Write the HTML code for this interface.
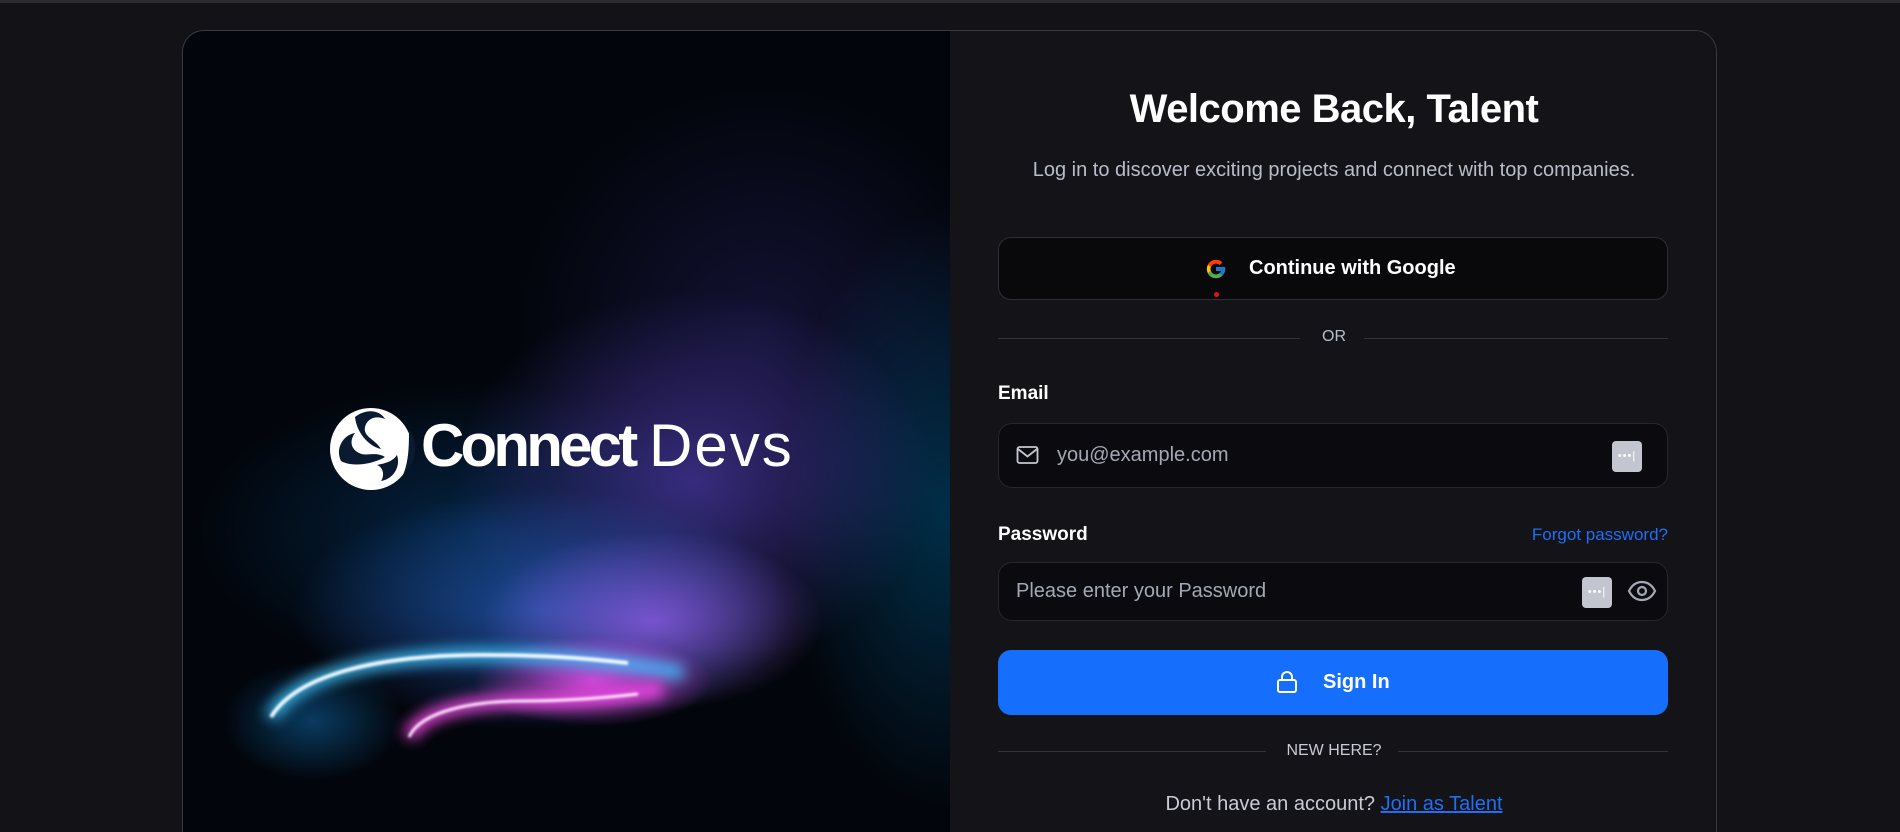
<!DOCTYPE html>
<html><head><meta charset="utf-8"><style>
*{margin:0;padding:0;box-sizing:border-box}
html,body{width:1900px;height:832px;overflow:hidden}
body{background:#131317;font-family:"Liberation Sans",sans-serif;position:relative}
.topbar{position:absolute;left:0;top:0;width:1900px;height:3px;background:#2c2c2e}
.card{position:absolute;left:182px;top:30px;width:1535px;height:802px;border:1px solid #3a3a42;border-bottom:none;border-radius:22px 22px 0 0;overflow:hidden;background:#121217}
.left{position:absolute;left:0;top:0;width:767px;height:802px;background:
radial-gradient(ellipse 120px 45px at 410px 650px,rgba(235,75,235,.85),rgba(235,75,235,0) 100%),
radial-gradient(ellipse 170px 90px at 470px 590px,rgba(150,95,240,.75),rgba(150,95,240,0) 100%),
radial-gradient(ellipse 250px 120px at 360px 580px,rgba(45,110,225,.6),rgba(45,110,225,0) 100%),
radial-gradient(ellipse 90px 60px at 130px 690px,rgba(20,140,225,.4),rgba(20,140,225,0) 100%),
radial-gradient(ellipse 240px 190px at 510px 450px,rgba(80,60,175,.65),rgba(80,60,175,0) 100%),
radial-gradient(ellipse 160px 300px at 760px 480px,rgba(0,95,145,.45),rgba(0,95,145,0) 100%),
radial-gradient(ellipse 280px 150px at 290px 500px,rgba(5,60,110,.55),rgba(5,60,110,0) 100%),
radial-gradient(ellipse 250px 250px at 580px 300px,rgba(35,30,90,.5),rgba(35,30,90,0) 100%),
#02050b}
.right{position:absolute;left:767px;top:0;width:768px;height:802px;background:#131318}
.r{position:absolute;left:0;width:100%;text-align:center}
h1{position:absolute;top:56px;left:0;width:100%;text-align:center;color:#fff;font-size:40px;font-weight:bold;letter-spacing:-0.5px}
.sub{top:128px;color:#b9bdc9;font-size:20px}
.btn{position:absolute;left:48px;width:670px;border-radius:13px}
.g{top:206px;height:63px;background:#09090b;border:1px solid #2e2e36;color:#fff;font-size:20px;font-weight:bold}
.div{position:absolute;left:48px;width:670px;height:1px;background:#34343c}
.lbl{position:absolute;left:48px;color:#fff;font-size:19px;font-weight:bold}
.inp{position:absolute;left:48px;width:670px;background:#0b0b0f;border:1px solid #26262e;border-radius:14px;color:#a4a8b4;font-size:20px}
.key{position:absolute;width:30px;height:31px;background:#c3c6ce;border-radius:4px;color:#fff;font-size:11px;line-height:31px;text-align:center;letter-spacing:1px}
.sign{top:619px;height:65px;background:#166ffc;color:#fff;font-size:20px;font-weight:bold}
</style></head><body>
<div class="topbar"></div>
<div class="card">
 <div class="left">
  <svg width="767" height="802" style="position:absolute;left:0;top:0">
   <defs>
    <filter id="b3" x="-20%" y="-100%" width="140%" height="300%"><feGaussianBlur stdDeviation="7"/></filter>
    <filter id="b4" x="-20%" y="-100%" width="140%" height="300%"><feGaussianBlur stdDeviation="1.2"/></filter>
   </defs>
   <path d="M88 686 C115 642 200 624 300 624 C380 624 440 632 500 642" stroke="#3fc4ff" stroke-width="14" fill="none" filter="url(#b3)" opacity=".9"/>
   <path d="M88 686 C115 642 200 624 300 624 C360 624 400 627 445 632" stroke="#f4fcff" stroke-width="4" fill="none" filter="url(#b4)"/>
   <path d="M226 706 C238 680 290 670 340 670 C400 670 440 664 480 658" stroke="#ff4cf0" stroke-width="14" fill="none" filter="url(#b3)" opacity=".9"/>
   <path d="M226 706 C238 680 290 670 340 670 C385 670 420 667 455 663" stroke="#ffe8ff" stroke-width="3" fill="none" filter="url(#b4)"/>
   <circle cx="188" cy="418" r="41" fill="#fff"/>
   <path d="M172 386 c10 -8 24 -8 30 2 c-10 -4 -18 0 -20 8 c-2 10 10 12 16 22 c-10 -2 -24 -14 -26 -32z" fill="#0a1a30"/>
   <path d="M158 430 c-6 -12 2 -26 14 -28 c-6 8 -4 16 4 20 c8 4 16 -2 26 4 c-14 8 -34 10 -44 4z" fill="#0a1a30"/>
   <path d="M214 424 c4 12 -4 24 -16 26 c4 -6 2 -14 -4 -16 c10 -2 16 -4 20 -10z" fill="#0a1a30"/>
   <path d="M226 398 c10 14 8 34 -6 46 c6 -14 6 -30 6 -46z" fill="#0a1a30"/>
  </svg>
  <div style="position:absolute;left:238px;top:380px;color:#fff;font-size:60px;font-weight:bold;letter-spacing:-3.8px;line-height:70px">Connect</div>
  <div style="position:absolute;left:466px;top:380px;color:#fff;font-size:60px;letter-spacing:2px;line-height:70px">Devs</div>
 </div>
 <div class="right">
  <h1>Welcome Back, Talent</h1>
  <div class="r sub">Log in to discover exciting projects and connect with top companies.</div>
  <div class="btn g">
   <svg width="22" height="22" viewBox="0 0 48 48" style="position:absolute;left:206px;top:20px">
    <path fill="#FFC107" d="M43.6 20.1H42V20H24v8h11.3C33.7 32.7 29.2 36 24 36c-6.6 0-12-5.4-12-12s5.4-12 12-12c3.1 0 5.8 1.2 7.9 3l5.7-5.7C34 6.1 29.3 4 24 4 12.9 4 4 12.9 4 24s8.9 20 20 20 20-8.9 20-20c0-1.3-.1-2.6-.4-3.9z"/>
    <path fill="#FF3D00" d="M6.3 14.7l6.6 4.8C14.7 15.1 19 12 24 12c3.1 0 5.8 1.2 7.9 3l5.7-5.7C34 6.1 29.3 4 24 4 16.3 4 9.7 8.3 6.3 14.7z"/>
    <path fill="#4CAF50" d="M24 44c5.2 0 9.9-2 13.4-5.2l-6.2-5.2C29.2 35.1 26.7 36 24 36c-5.2 0-9.600-3.3-11.3-8l-6.5 5C9.5 39.6 16.2 44 24 44z"/>
    <path fill="#1976D2" d="M43.6 20.1H42V20H24v8h11.3c-.8 2.2-2.2 4.2-4.1 5.6l6.2 5.2C37 39.2 44 34 44 24c0-1.3-.1-2.6-.4-3.9z"/>
   </svg>
   <div style="position:absolute;left:215px;top:54px;width:5px;height:5px;border-radius:50%;background:#e0131a"></div>
   <div style="position:absolute;left:250px;top:19px">Continue with Google</div>
  </div>
  <div class="div" style="top:307px;width:302px"></div>
  <div class="div" style="top:307px;left:414px;width:304px"></div>
  <div class="r" style="top:297px;color:#b9bdc9;font-size:16px">OR</div>
  <div class="lbl" style="top:352px">Email</div>
  <div class="inp" style="top:392px;height:65px">
   <svg width="24" height="22" viewBox="0 0 24 22" style="position:absolute;left:17px;top:21px" fill="none" stroke="#c6c9d1" stroke-width="1.8"><rect x="1.5" y="2" width="20" height="16" rx="2"/><path d="M2 4l9.5 7.5L21 4"/></svg>
   <div style="position:absolute;left:58px;top:20px">you@example.com</div>
   <div class="key" style="left:613px;top:17px">•••|</div>
  </div>
  <div class="lbl" style="top:493px">Password</div>
  <div style="position:absolute;right:50px;top:494px;color:#1f6ff5;font-size:17px">Forgot password?</div>
  <div class="inp" style="top:531px;height:59px">
   <div style="position:absolute;left:17px;top:17px">Please enter your Password</div>
   <div class="key" style="left:583px;top:14px">•••|</div>
   <svg width="30" height="24" viewBox="0 0 30 24" style="position:absolute;left:628px;top:16px" fill="none" stroke="#a4a8b2" stroke-width="2.2"><path d="M2 12C5 6 9.5 3 15 3s10 3 13 9c-3 6-7.5 9-13 9S5 18 2 12z"/><circle cx="15" cy="12" r="4"/></svg>
  </div>
  <div class="btn sign">
   <svg width="22" height="24" viewBox="0 0 22 24" style="position:absolute;left:278px;top:20px" fill="none" stroke="#fff" stroke-width="2"><rect x="2" y="10" width="18" height="12" rx="2"/><path d="M6 10V7a5 5 0 0 1 10 0v3"/></svg>
   <div style="position:absolute;left:325px;top:21px">Sign In</div>
  </div>
  <div class="div" style="top:720px;width:268px"></div>
  <div class="div" style="top:720px;left:448px;width:270px"></div>
  <div class="r" style="top:711px;color:#c9ccd4;font-size:16px">NEW HERE?</div>
  <div class="r" style="top:762px;color:#c9ccd4;font-size:20px">Don't have an account? <span style="color:#1f6ff5;text-decoration:underline">Join as Talent</span></div>
 </div>
</div>
</body></html>
